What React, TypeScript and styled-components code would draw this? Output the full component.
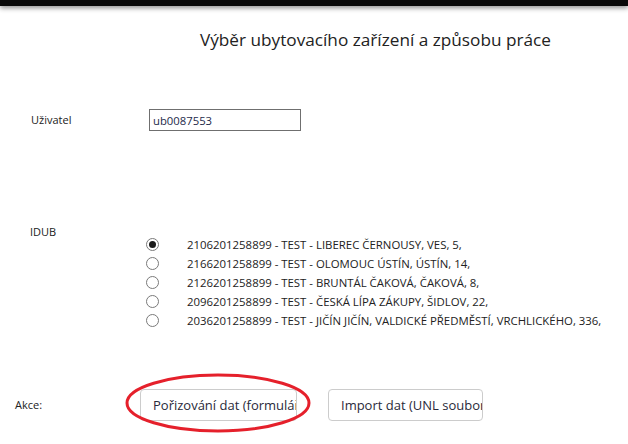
import { useState } from "react";
import styled, { createGlobalStyle } from "styled-components";

const GlobalStyle = createGlobalStyle`
  html, body {
    margin: 0;
    padding: 0;
    background: #ffffff;
  }
  body {
    font-family: "Open Sans", "Noto Sans", "DejaVu Sans", sans-serif;
    color: #222222;
  }
`;

const TopBar = styled.div`
  height: 6px;
  background: #0a0a0a;
  box-shadow: 0 2px 5px rgba(0, 0, 0, 0.45);
`;

const Page = styled.div`
  position: relative;
  height: 438px;
  overflow: hidden;
`;

const Title = styled.h1`
  margin: 21px 0 0 200px;
  font-size: 17.2px;
  font-weight: 400;
  line-height: 26px;
  color: #222;
  white-space: nowrap;
`;

const Row = styled.div<{ $top: number; $indent: number; $labelWidth: number }>`
  display: flex;
  align-items: flex-start;
  margin-top: ${(p) => p.$top}px;
  padding-left: ${(p) => p.$indent}px;

  & > label:first-child {
    width: ${(p) => p.$labelWidth}px;
  }
`;

const Label = styled.label<{ $lineHeight?: number }>`
  flex: none;
  font-size: 11px;
  line-height: ${(p) => p.$lineHeight ?? 22}px;
  color: #222;
`;

const TextInput = styled.input`
  width: 152px;
  height: 22px;
  box-sizing: border-box;
  border: 1px solid #6f6f6f;
  padding: 0 3px;
  font-family: inherit;
  font-size: 11.3px;
  color: #1e2a4a;
  outline: none;
`;

const RadioList = styled.div`
  display: flex;
  flex-direction: column;
  padding-top: 10px;
`;

const RadioRow = styled.label`
  display: flex;
  align-items: center;
  height: 19.1px;
  font-size: 11.4px;
  color: #222;
  white-space: nowrap;
`;

const Radio = styled.input`
  appearance: none;
  flex: none;
  width: 13px;
  height: 13px;
  margin: 0 28px 0 0;
  border: 1px solid #7a7a7a;
  border-radius: 50%;
  background: #fff;
  display: grid;
  place-content: center;

  &::before {
    content: "";
    width: 7px;
    height: 7px;
    border-radius: 50%;
    background: #1a1a1a;
    transform: scale(0);
  }

  &:checked::before {
    transform: scale(1);
  }
`;

const Actions = styled.div`
  display: flex;
  gap: 31px;
`;

const ButtonWrap = styled.div`
  position: relative;
`;

const ActionButton = styled.button<{ $width: number }>`
  width: ${(p) => p.$width}px;
  height: 32px;
  padding: 0 0 0 12px;
  border: 1px solid #cccccc;
  border-radius: 4px;
  background: #fff;
  font-family: inherit;
  font-size: 13px;
  color: #2a2a3a;
  text-align: left;
  white-space: nowrap;
  overflow: hidden;
`;

const Highlight = styled.svg`
  position: absolute;
  left: -15px;
  top: -16px;
  width: 186px;
  height: 60px;
  overflow: visible;
  pointer-events: none;
`;

const places = [
  "2106201258899 - TEST - LIBEREC ČERNOUSY, VES, 5,",
  "2166201258899 - TEST - OLOMOUC ÚSTÍN, ÚSTÍN, 14,",
  "2126201258899 - TEST - BRUNTÁL ČAKOVÁ, ČAKOVÁ, 8,",
  "2096201258899 - TEST - ČESKÁ LÍPA ZÁKUPY, ŠIDLOV, 22,",
  "2036201258899 - TEST - JIČÍN JIČÍN, VALDICKÉ PŘEDMĚSTÍ, VRCHLICKÉHO, 336,",
];

export default function App() {
  const [selected, setSelected] = useState(0);

  return (
    <>
      <GlobalStyle />
      <TopBar />
      <Page>
        <Title>Výběr ubytovacího zařízení a způsobu práce</Title>

        <Row $top={56} $indent={31} $labelWidth={118}>
          <Label>Uživatel</Label>
          <TextInput defaultValue="ub0087553" />
        </Row>

        <Row $top={94} $indent={30} $labelWidth={116}>
          <Label $lineHeight={14}>IDUB</Label>
          <RadioList>
            {places.map((place, i) => (
              <RadioRow key={place}>
                <Radio
                  type="radio"
                  name="idub"
                  checked={selected === i}
                  onChange={() => setSelected(i)}
                />
                {place}
              </RadioRow>
            ))}
          </RadioList>
        </Row>

        <Row $top={59} $indent={15} $labelWidth={125}>
          <Label $lineHeight={32}>Akce:</Label>
          <Actions>
            <ButtonWrap>
              <ActionButton $width={157}>Pořizování dat (formulář)</ActionButton>
              <Highlight viewBox="0 0 186 60">
                <ellipse
                  cx="93"
                  cy="30"
                  rx="91"
                  ry="28"
                  fill="none"
                  stroke="#e5202b"
                  strokeWidth="3"
                />
              </Highlight>
            </ButtonWrap>
            <ActionButton $width={155}>Import dat (UNL soubor)</ActionButton>
          </Actions>
        </Row>
      </Page>
    </>
  );
}
